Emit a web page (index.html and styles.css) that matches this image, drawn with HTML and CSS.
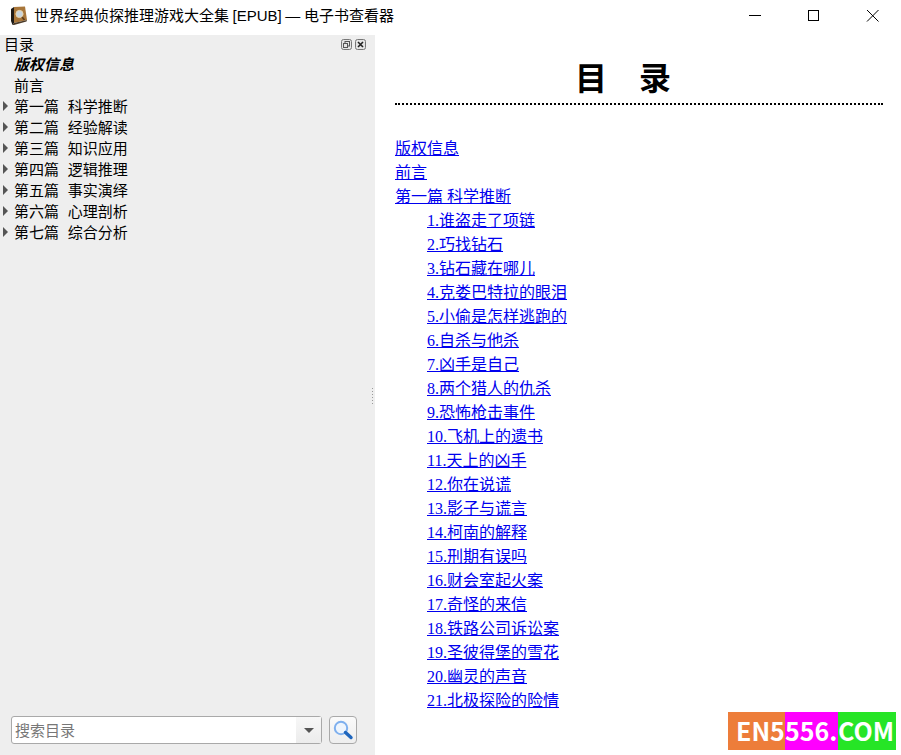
FILE: index.html
```html
<!DOCTYPE html>
<html lang="zh">
<head>
<meta charset="utf-8">
<title>电子书查看器</title>
<link rel="stylesheet" href="styles.css">
</head>
<body>
<div class="app">
  <header class="titlebar">
    <svg class="app-icon" width="20" height="20" viewBox="0 0 20 20">
      <path d="M2 3 L5 1 L5 17 L3.5 19 L2 15 Z" fill="#1d1a17"/>
      <path d="M5 1 L16 0.5 L18 14 L5 17 Z" fill="#a8763a"/>
      <path d="M5 17 L18 14 L17.5 15.5 L5 19 L3.5 19 Z" fill="#4a3a28"/>
      <circle cx="10.5" cy="8" r="3.6" fill="#c9d4dc" stroke="#e7d6b0" stroke-width="1"/>
      <path d="M13 11 L15.5 14" stroke="#5a3c1c" stroke-width="1.6"/>
    </svg>
    <span class="title-text">世界经典侦探推理游戏大全集 [EPUB] — 电子书查看器</span>
    <div class="win-controls">
      <svg class="win-btn" width="59" height="31" viewBox="0 0 59 31"><path d="M25 15.5H37" stroke="#000" fill="none"/></svg>
      <svg class="win-btn" width="59" height="31" viewBox="0 0 59 31"><rect x="25.5" y="10.5" width="10" height="10" stroke="#000" fill="none"/></svg>
      <svg class="win-btn" width="59" height="31" viewBox="0 0 59 31"><path d="M25 10L36.5 21.5M36.5 10L25 21.5" stroke="#000" fill="none"/></svg>
    </div>
  </header>
  <main class="main">
    <aside class="sidebar">
      <div class="dock-head">
        <span>目录</span>
        <div class="dock-icons">
          <svg width="11" height="11" viewBox="0 0 11 11"><rect x=".5" y=".5" width="10" height="10" rx="2" fill="#e4e4e4" stroke="#777"/><rect x="4" y="2.5" width="4.5" height="4.5" fill="none" stroke="#555"/><rect x="2.5" y="4.5" width="4" height="4" fill="#e4e4e4" stroke="#555"/></svg>
          <svg width="11" height="11" viewBox="0 0 11 11"><rect x=".5" y=".5" width="10" height="10" rx="2" fill="#e4e4e4" stroke="#777"/><path d="M3 3L8 8M8 3L3 8" stroke="#222" stroke-width="1.6"/></svg>
        </div>
      </div>
      <ul class="tree">
        <li class="tree-row current"><span class="arrow none"></span>版权信息</li>
        <li class="tree-row"><span class="arrow none"></span>前言</li>
        <li class="tree-row"><span class="arrow"></span>第一篇&nbsp;&nbsp;科学推断</li>
        <li class="tree-row"><span class="arrow"></span>第二篇&nbsp;&nbsp;经验解读</li>
        <li class="tree-row"><span class="arrow"></span>第三篇&nbsp;&nbsp;知识应用</li>
        <li class="tree-row"><span class="arrow"></span>第四篇&nbsp;&nbsp;逻辑推理</li>
        <li class="tree-row"><span class="arrow"></span>第五篇&nbsp;&nbsp;事实演绎</li>
        <li class="tree-row"><span class="arrow"></span>第六篇&nbsp;&nbsp;心理剖析</li>
        <li class="tree-row"><span class="arrow"></span>第七篇&nbsp;&nbsp;综合分析</li>
      </ul>
      <div class="search">
        <div class="search-box">
          <span class="placeholder">搜索目录</span>
          <span class="drop"><span class="drop-arrow"></span></span>
        </div>
        <div class="search-btn">
          <svg width="22" height="22" viewBox="0 0 22 22">
            <circle cx="9" cy="9" r="6.2" fill="#eef5fd" stroke="#7fb0ee" stroke-width="2"/>
            <path d="M13.5 13.5L19 18.5" stroke="#1f66bd" stroke-width="3.4" stroke-linecap="round"/>
          </svg>
        </div>
      </div>
      <div class="grip"><i></i><i></i><i></i><i></i><i></i><i></i></div>
    </aside>
    <section class="content">
      <h1 class="toc-title">目　录　</h1>
      <ul class="toc">
        <li><a href="#">版权信息</a></li>
        <li><a href="#">前言</a></li>
        <li><a href="#">第一篇 科学推断</a></li>
        <li class="sub"><a href="#">1.谁盗走了项链</a></li>
        <li class="sub"><a href="#">2.巧找钻石</a></li>
        <li class="sub"><a href="#">3.钻石藏在哪儿</a></li>
        <li class="sub"><a href="#">4.克娄巴特拉的眼泪</a></li>
        <li class="sub"><a href="#">5.小偷是怎样逃跑的</a></li>
        <li class="sub"><a href="#">6.自杀与他杀</a></li>
        <li class="sub"><a href="#">7.凶手是自己</a></li>
        <li class="sub"><a href="#">8.两个猎人的仇杀</a></li>
        <li class="sub"><a href="#">9.恐怖枪击事件</a></li>
        <li class="sub"><a href="#">10.飞机上的遗书</a></li>
        <li class="sub"><a href="#">11.天上的凶手</a></li>
        <li class="sub"><a href="#">12.你在说谎</a></li>
        <li class="sub"><a href="#">13.影子与谎言</a></li>
        <li class="sub"><a href="#">14.柯南的解释</a></li>
        <li class="sub"><a href="#">15.刑期有误吗</a></li>
        <li class="sub"><a href="#">16.财会室起火案</a></li>
        <li class="sub"><a href="#">17.奇怪的来信</a></li>
        <li class="sub"><a href="#">18.铁路公司诉讼案</a></li>
        <li class="sub"><a href="#">19.圣彼得堡的雪花</a></li>
        <li class="sub"><a href="#">20.幽灵的声音</a></li>
        <li class="sub"><a href="#">21.北极探险的险情</a></li>
      </ul>
    </section>
  </main>
  <div class="watermark"><span class="wm-a">EN5</span><span class="wm-b">556.</span><span class="wm-c">COM</span></div>
</div>
</body>
</html>
```
FILE: styles.css
```css
* { box-sizing: border-box; }
html, body { margin: 0; height: 100%; }
body {
  background: #fff;
  color: #000;
  font-family: "Noto Sans CJK SC", "Liberation Sans", sans-serif;
  overflow: hidden;
}
.app {
  position: relative;
  display: flex;
  flex-direction: column;
  width: 901px;
  height: 755px;
  overflow: hidden;
}
.titlebar {
  display: flex;
  align-items: center;
  height: 35px;
  padding-left: 9px;
  flex: none;
  font-size: 15px;
  background: #fff;
}
.app-icon { flex: none; margin-right: 5px; margin-top: -4px; }
.title-text { line-height: 20px; margin-top: -4px; white-space: nowrap; word-spacing: -0.6px; font-family: "Liberation Sans", "Noto Sans CJK SC", sans-serif; }
.win-controls { display: flex; margin-left: auto; align-self: flex-start; }
.win-btn { display: block; }
.main { display: flex; flex: 1; min-height: 0; }
.sidebar {
  position: relative;
  display: flex;
  flex-direction: column;
  width: 375px;
  flex: none;
  background: #eeeeee;
  font-size: 15px;
}
.dock-head {
  display: flex;
  justify-content: space-between;
  align-items: center;
  height: 18px;
  padding: 0 9px 0 4px;
  line-height: 18px;
}
.dock-icons { display: flex; gap: 3px; margin-top: 1px; }
.dock-icons svg { display: block; }
.tree { list-style: none; margin: 0; padding: 0; flex: 1; }
.tree-row {
  display: flex;
  align-items: center;
  height: 21px;
  line-height: 20px;
  white-space: pre;
  word-spacing: 1px;
}
.current { font-weight: 700; font-style: italic; }
.arrow {
  width: 0;
  height: 0;
  margin: 0 6px 0 3px;
  border-left: 5px solid #555;
  border-top: 5px solid transparent;
  border-bottom: 5px solid transparent;
}
.arrow.none { border-left-color: transparent; }
.search {
  display: flex;
  align-items: center;
  gap: 7px;
  padding: 0 0 11px 11px;
}
.search-box {
  display: flex;
  width: 311px;
  height: 28px;
  background: #fff;
  border: 1px solid #a9a9a9;
  border-radius: 3px;
}
.placeholder {
  flex: 1;
  padding-left: 3px;
  line-height: 25px;
  color: #777;
  font-size: 15px;
}
.drop {
  display: flex;
  align-items: center;
  justify-content: center;
  width: 25px;
  background: linear-gradient(#f7f7f7, #ececec);
}
.drop-arrow {
  width: 0;
  height: 0;
  border-top: 5px solid #555;
  border-left: 5px solid transparent;
  border-right: 5px solid transparent;
}
.search-btn {
  display: flex;
  align-items: center;
  justify-content: center;
  width: 28px;
  height: 28px;
  background: linear-gradient(#fafafa, #eeeeee);
  border: 1px solid #a9a9a9;
  border-radius: 4px;
}
.grip {
  position: absolute;
  top: 353px;
  right: 2px;
  display: flex;
  flex-direction: column;
  gap: 2px;
}
.grip i { display: block; width: 1px; height: 1px; background: #999; }
.content {
  flex: 1;
  min-width: 0;
  padding: 21px 18px 0 20px;
  font-family: "Liberation Serif", "Noto Sans CJK SC", serif;
}
.toc-title {
  margin: 0 0 32px;
  height: 49px;
  font-size: 32px;
  line-height: 40px;
  font-weight: 700;
  text-align: center;
  white-space: pre;
  border-bottom: 2px dotted #000;
  font-family: "Noto Sans CJK SC", sans-serif;
}
.toc { list-style: none; margin: 0; padding: 0; font-size: 16px; line-height: 24px; }
.sub { padding-left: 32px; }
.toc a { color: #0000ee; text-decoration: underline; }
.watermark {
  position: absolute;
  right: 5px;
  bottom: 5px;
  display: flex;
  height: 38px;
  color: #fff;
  font-family: "Noto Sans CJK SC", "Noto Sans", sans-serif;
  font-size: 25px;
  font-weight: 700;
  line-height: 36px;
}
.wm-a { width: 57px; background: #ed7d3a; padding-left: 8px; white-space: nowrap; }
.wm-b { width: 53px; background: #ff00ff; white-space: nowrap; }
.wm-c { width: 58px; background: #26e526; white-space: nowrap; }
```
